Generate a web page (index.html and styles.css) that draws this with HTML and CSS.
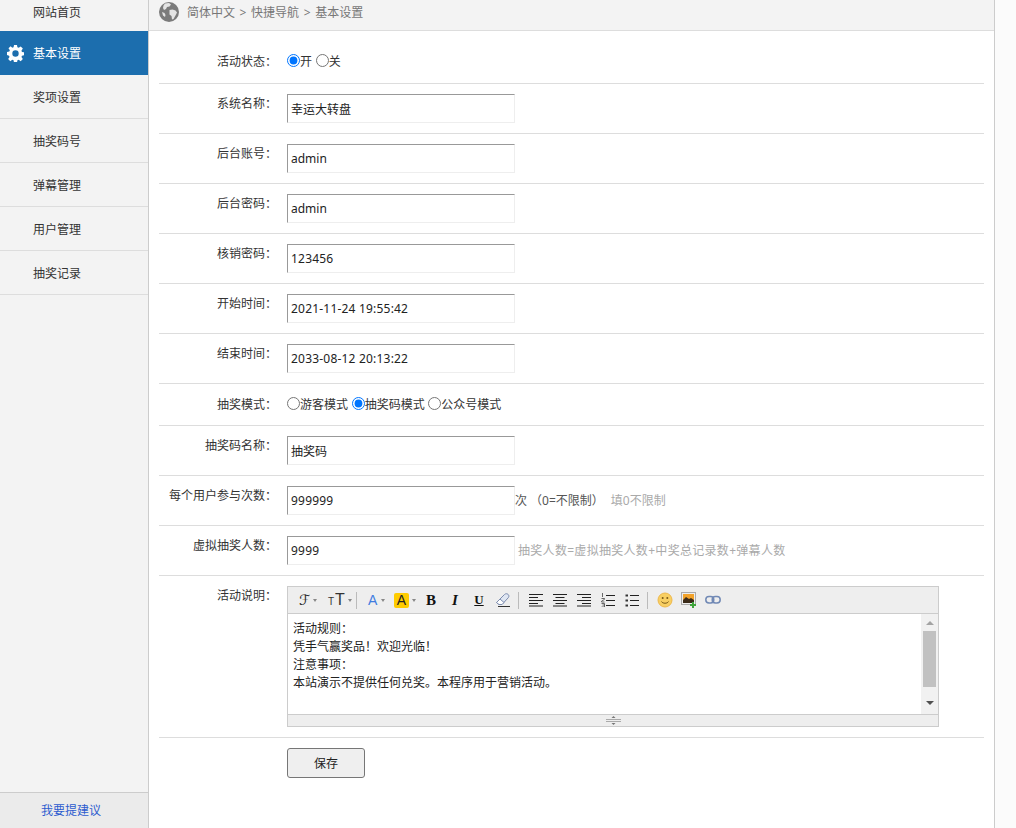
FILE: index.html
```html
<!DOCTYPE html>
<html lang="zh-CN">
<head>
    <meta charset="UTF-8">
    <meta name="viewport" content="width=device-width, initial-scale=1.0">
    <title>基本设置</title>
    <link rel="stylesheet" href="styles.css">
</head>
<body>
    <div class="app">
        <!-- Sidebar -->
        <div class="sidebar">
            <a class="nav-home" href="#">网站首页</a>
            <a class="nav-item active" href="#">
                <svg class="gear" viewBox="0 0 16 16" width="17" height="17">
                    <path fill="#fff" fill-rule="evenodd" d="M6.6 0h2.8l.4 2.2 1.2.5L12.900 1.400l2 2-1.300 1.900.5 1.200 2.200.4v2.800l-2.200.4-.5 1.200 1.300 1.900-2 2-1.900-1.300-1.200.5-.4 2.200H6.600l-.4-2.200-1.200-.5-1.900 1.300-2-2 1.300-1.900-.5-1.200L0 9.400V6.600l2.200-.4.500-1.200L1.400 3.100l2-2L5 2.700l1.200-.5zM8 5a3 3 0 1 0 0 6 3 3 0 0 0 0-6z"/>
                </svg>
                基本设置
            </a>
            <a class="nav-item" href="#">奖项设置</a>
            <a class="nav-item" href="#">抽奖码号</a>
            <a class="nav-item" href="#">弹幕管理</a>
            <a class="nav-item" href="#">用户管理</a>
            <a class="nav-item" href="#">抽奖记录</a>
            <a class="suggest" href="#">我要提建议</a>
        </div>

        <!-- Main -->
        <div class="main">
            <div class="crumbs">
                <svg class="globe" viewBox="0 0 20 20" width="20" height="20">
                    <circle cx="10" cy="10" r="10" fill="#7b7b7b"/>
                    <path fill="#e4e4e4" d="M6 1.500l4-.5 2 1.500-1.500 2-2.500.5-1 2-2 1-1-2 .5-2.500zM10.500 8l3-.5 3 1 1.500 2-1.500 3-2 3.500-1.500.5-.5-3.500-2-1.500z"/>
                    <path fill="#e4e4e4" d="M3 10l2.500 1 1 2-.5 2-2-1.500z"/>
                </svg>
                <span class="crumb-text">简体中文 &gt; 快捷导航 &gt; 基本设置</span>
            </div>

            <form class="form">
                <div class="row row-first">
                    <label class="row-label">活动状态：</label>
                    <div class="choices">
                        <label><input type="radio" name="status" checked>开</label>
                        <label><input type="radio" name="status">关</label>
                    </div>
                </div>
                <div class="row">
                    <label class="row-label">系统名称：</label>
                    <input class="text-input" type="text" value="幸运大转盘">
                </div>
                <div class="row">
                    <label class="row-label">后台账号：</label>
                    <input class="text-input" type="text" value="admin">
                </div>
                <div class="row">
                    <label class="row-label">后台密码：</label>
                    <input class="text-input" type="text" value="admin">
                </div>
                <div class="row">
                    <label class="row-label">核销密码：</label>
                    <input class="text-input num" type="text" value="123456">
                </div>
                <div class="row">
                    <label class="row-label">开始时间：</label>
                    <input class="text-input num" type="text" value="2021-11-24 19:55:42">
                </div>
                <div class="row">
                    <label class="row-label">结束时间：</label>
                    <input class="text-input num" type="text" value="2033-08-12 20:13:22">
                </div>
                <div class="row row-choices">
                    <label class="row-label">抽奖模式：</label>
                    <div class="choices">
                        <label><input type="radio" name="mode">游客模式</label>
                        <label><input type="radio" name="mode" checked>抽奖码模式</label>
                        <label><input type="radio" name="mode">公众号模式</label>
                    </div>
                </div>
                <div class="row">
                    <label class="row-label">抽奖码名称：</label>
                    <input class="text-input" type="text" value="抽奖码">
                </div>
                <div class="row">
                    <label class="row-label">每个用户参与次数：</label>
                    <input class="text-input num" type="text" value="999999">
                    <span class="unit">次 （0=不限制）</span>
                    <span class="hint hint-limit">填0不限制</span>
                </div>
                <div class="row">
                    <label class="row-label">虚拟抽奖人数：</label>
                    <input class="text-input num" type="text" value="9999">
                    <span class="hint hint-count">抽奖人数=虚拟抽奖人数+中奖总记录数+弹幕人数</span>
                </div>
                <div class="row row-editor">
                    <label class="row-label">活动说明：</label>
                    <div class="editor">
                        <div class="toolbar">
                            <span class="tool tool-font">ℱ<i class="caret"></i></span>
                            <span class="tool tool-size"><small>T</small>T<i class="caret"></i></span>
                            <span class="sep"></span>
                            <span class="tool tool-color">A<i class="caret"></i></span>
                            <span class="tool tool-hilite"><b>A</b><i class="caret"></i></span>
                            <span class="tool tool-bold">B</span>
                            <span class="tool tool-italic">I</span>
                            <span class="tool tool-under">U</span>
                            <span class="tool">
                                <svg viewBox="0 0 16 16" width="16" height="16">
                                    <path d="M1.500 10.500L9.500 2.500c1-1 2.500-1 3.500-.2s1.300 2.300.3 3.400L7 12.500H4z" fill="#dfe6f2" stroke="#7d8db0"/>
                                    <path d="M1.500 10.500L4 12.500h3L9 10.500 5 7z" fill="#fff" stroke="#7d8db0"/>
                                    <path d="M3 14.500h12" stroke="#333" stroke-width="1"/>
                                </svg>
                            </span>
                            <span class="sep sep-b"></span>
                            <span class="tool">
                                <svg viewBox="0 0 14 14" width="14" height="14"><path d="M0 1.500h14M0 4.500h9M0 7.500h14M0 10.500h9M0 13h14" stroke="#222"/></svg>
                            </span>
                            <span class="tool">
                                <svg viewBox="0 0 14 14" width="14" height="14"><path d="M0 1.500h14M2.500 4.500h9M0 7.500h14M2.500 10.500h9M0 13h14" stroke="#222"/></svg>
                            </span>
                            <span class="tool">
                                <svg viewBox="0 0 14 14" width="14" height="14"><path d="M0 1.500h14M5 4.500h9M0 7.500h14M5 10.500h9M0 13h14" stroke="#222"/></svg>
                            </span>
                            <span class="tool">
                                <svg viewBox="0 0 14 14" width="14" height="14"><path d="M5 2.500h9M5 7.500h9M5 12.500h9" stroke="#222"/><path d="M1.500 0v4M0.500 5.500h3v.8l-3 2v.7h3M0.500 10.500h3v3.500h-3M1.500 12h2" stroke="#444" stroke-width=".8" fill="none"/></svg>
                            </span>
                            <span class="tool">
                                <svg viewBox="0 0 14 14" width="14" height="14"><path d="M5 2.500h9M5 7.500h9M5 12.500h9" stroke="#222"/><path d="M0.500 1.500h2.500v2H0.500zM0.500 6.500h2.500v2H0.500zM0.500 11.500h2.500v2H0.500z" fill="#333"/></svg>
                            </span>
                            <span class="sep sep-c"></span>
                            <span class="tool">
                                <svg viewBox="0 0 16 16" width="16" height="16">
                                    <circle cx="8" cy="8" r="7" fill="#f8cf62" stroke="#eeb84c"/>
                                    <circle cx="5.700" cy="6" r="1" fill="#7a5a17"/>
                                    <circle cx="10.300" cy="6" r="1" fill="#7a5a17"/>
                                    <path d="M4.500 9.500c1 2.300 6 2.300 7 0" fill="none" stroke="#7a5a17"/>
                                </svg>
                            </span>
                            <span class="tool">
                                <svg viewBox="0 0 17 17" width="17" height="17">
                                    <rect x=".5" y=".5" width="14" height="12" fill="#eee" stroke="#aaa"/>
                                    <rect x="2" y="2" width="11" height="9" fill="#f2a22a"/>
                                    <path d="M2 8l3-3 3 2 2-1 3 2v3H2z" fill="#3a2a18"/>
                                    <path d="M11 10h2v2h2v2h-2v2h-2v-2H9v-2h2z" fill="#3fa33a"/>
                                </svg>
                            </span>
                            <span class="tool">
                                <svg viewBox="0 0 16 10" width="16" height="10">
                                    <rect x=".8" y="1.500" width="8" height="6.500" rx="3.200" fill="none" stroke="#7189b5" stroke-width="1.500"/>
                                    <rect x="7.200" y="1.500" width="8" height="6.500" rx="3.200" fill="none" stroke="#7189b5" stroke-width="1.500"/>
                                </svg>
                            </span>
                        </div>
                        <div class="editor-body">
                            <div class="editor-text">
                                <p>活动规则：</p>
                                <p>凭手气赢奖品！欢迎光临！</p>
                                <p>注意事项：</p>
                                <p>本站演示不提供任何兑奖。本程序用于营销活动。</p>
                            </div>
                            <div class="scroll">
                                <i class="scroll-up"></i>
                                <i class="scroll-thumb"></i>
                                <i class="scroll-down"></i>
                            </div>
                        </div>
                        <div class="resize">
                            <svg viewBox="0 0 15 9" width="15" height="9">
                                <path d="M7.500 0l2 2h-4z" fill="#777"/>
                                <path d="M0 3.500h15M0 5.500h15" stroke="#aaa"/>
                                <path d="M7.500 9l2-2h-4z" fill="#777"/>
                            </svg>
                        </div>
                    </div>
                </div>
                <div class="actions">
                    <button class="save" type="button">保存</button>
                </div>
            </form>
        </div>
    </div>
</body>
</html>
```

FILE: styles.css
```css
* {
    margin: 0;
    padding: 0;
    box-sizing: border-box;
}

html, body {
    height: 100%;
    overflow: hidden;
}

body {
    font-family: "Noto Sans", "Noto Sans CJK SC", sans-serif;
    font-size: 12px;
    color: #333;
    background-color: #fbfbfb;
}

a {
    text-decoration: none;
}

.app {
    display: flex;
    height: 100vh;
}

/* Sidebar */
.sidebar {
    display: flex;
    flex-direction: column;
    width: 149px;
    flex: none;
    background-color: #f3f3f3;
    border-right: 1px solid #ccc;
}

.nav-home {
    height: 31px;
    padding-left: 33px;
    line-height: 25px;
    color: #333;
}

.nav-item {
    display: flex;
    align-items: center;
    height: 44px;
    padding-left: 33px;
    color: #333;
    border-bottom: 1px solid #ddd;
}

.nav-item.active {
    position: relative;
    color: #fff;
    background-color: #1c6eae;
    border-bottom: none;
}

.gear {
    position: absolute;
    left: 7px;
    top: 14px;
}

.suggest {
    margin-top: auto;
    height: 36px;
    padding-right: 6px;
    line-height: 36px;
    text-align: center;
    color: #2d5ccf;
    background-color: #ebebeb;
    border-top: 1px solid #ccc;
}

/* Main */
.main {
    width: 846px;
    flex: none;
    background-color: #fff;
    border-right: 1px solid #ccc;
}

.crumbs {
    display: flex;
    align-items: center;
    gap: 8px;
    height: 31px;
    padding: 0 0 6px 10px;
    color: #777;
    background-color: #f3f3f3;
    border-bottom: 1px solid #ddd;
}

.crumb-text {
    word-spacing: 1.500px;
}

.form {
    padding: 11px 10px 0;
}

.row {
    display: flex;
    align-items: flex-start;
    padding: 10px 0;
    border-bottom: 1px solid #ddd;
}

.row-first {
    padding-bottom: 11px;
}

.row-choices {
    padding-top: 11px;
}

.row-label {
    flex: none;
    width: 118px;
    margin-right: 10px;
    line-height: 20px;
    text-align: right;
}

.choices {
    line-height: 20px;
    white-space: nowrap;
    word-spacing: .5px;
}

.choices input {
    margin: 0;
    vertical-align: -1px;
}

.text-input {
    flex: none;
    width: 228px;
    height: 29px;
    padding: 0 3px;
    font: inherit;
    color: #222;
    background-color: #fff;
    border: 1px solid;
    border-color: #999 #eee #eee #999;
    outline: none;
}

.text-input.num {
    letter-spacing: .2px;
}

.unit {
    line-height: 29px;
    color: #555;
}

.hint {
    line-height: 29px;
    color: #aaa;
}

.hint-limit {
    margin-left: 7px;
}

.hint-count {
    margin-left: 3px;
    letter-spacing: .3px;
}

/* Editor */
.editor {
    width: 652px;
    height: 141px;
    border: 1px solid #ccc;
}

.toolbar {
    display: flex;
    align-items: center;
    height: 27px;
    padding-left: 5px;
    background-color: #eee;
    border-bottom: 1px solid #ccc;
}

.tool {
    display: flex;
    align-items: center;
    justify-content: center;
    width: 24px;
    height: 24px;
    flex: none;
    color: #222;
}

.tool-font, .tool-size, .tool-color, .tool-hilite {
    justify-content: flex-start;
}

.tool-font {
    width: 29px;
    padding-left: 6px;
    font: 14px "DejaVu Serif", "DejaVu Sans", serif;
}

.tool-size {
    width: 29px;
    padding-left: 6px;
    font: 16px "Liberation Sans", sans-serif;
    color: #333;
}

.tool-size small {
    align-self: flex-end;
    margin-bottom: 5px;
    margin-right: 1px;
    font-size: 10px;
}

.tool-color {
    width: 27px;
    padding-left: 6px;
    font: 14px "Liberation Sans", sans-serif;
    color: #3f7ce0;
}

.tool-color .caret {
    margin-left: 4px;
}

.tool-hilite {
    width: 30px;
    padding-left: 5px;
}

.tool-hilite b {
    width: 15px;
    height: 15px;
    font: 14px/15px "Liberation Sans", sans-serif;
    text-align: center;
    color: #222;
    background-color: #fc0;
    border-radius: 2px;
}

.tool-bold {
    font: bold 15px "Liberation Serif", serif;
    color: #111;
}

.tool-italic {
    font: italic bold 15px "Liberation Serif", serif;
    color: #111;
}

.tool-under {
    font: bold 13px "Liberation Serif", serif;
    text-decoration: underline;
    color: #111;
}

.caret {
    margin-left: 3px;
    border-top: 3px solid #888;
    border-left: 2.5px solid transparent;
    border-right: 2.5px solid transparent;
}

.sep {
    flex: none;
    width: 1px;
    height: 17px;
    margin: 0 5px;
    background-color: #bbb;
}

.sep-b {
    margin: 0 5px 0 3px;
}

.sep-c {
    margin: 0 5px 0 3px;
}

.editor-body {
    display: flex;
    height: 101px;
    border-bottom: 1px solid #ccc;
}

.editor-text {
    flex: 1;
    padding: 6px 5px;
    line-height: 18px;
    color: #222;
}

.scroll {
    display: flex;
    flex-direction: column;
    align-items: center;
    width: 17px;
    background-color: #f1f1f1;
}

.scroll-up {
    margin-top: 7px;
    border-bottom: 4px solid #a3a3a3;
    border-left: 4px solid transparent;
    border-right: 4px solid transparent;
}

.scroll-thumb {
    width: 13px;
    height: 56px;
    margin-top: 6px;
    background-color: #c1c1c1;
}

.scroll-down {
    margin-top: 14px;
    border-top: 4px solid #505050;
    border-left: 4px solid transparent;
    border-right: 4px solid transparent;
}

.resize {
    display: flex;
    align-items: center;
    justify-content: center;
    height: 11px;
    background-color: #eee;
}

.row-editor {
    padding-bottom: 10px;
}

.actions {
    padding: 10px 0 0 128px;
}

.save {
    width: 78px;
    height: 30px;
    font: inherit;
    color: #222;
    background-color: #efefef;
    border: 1px solid #767676;
    border-radius: 3px;
}
```
